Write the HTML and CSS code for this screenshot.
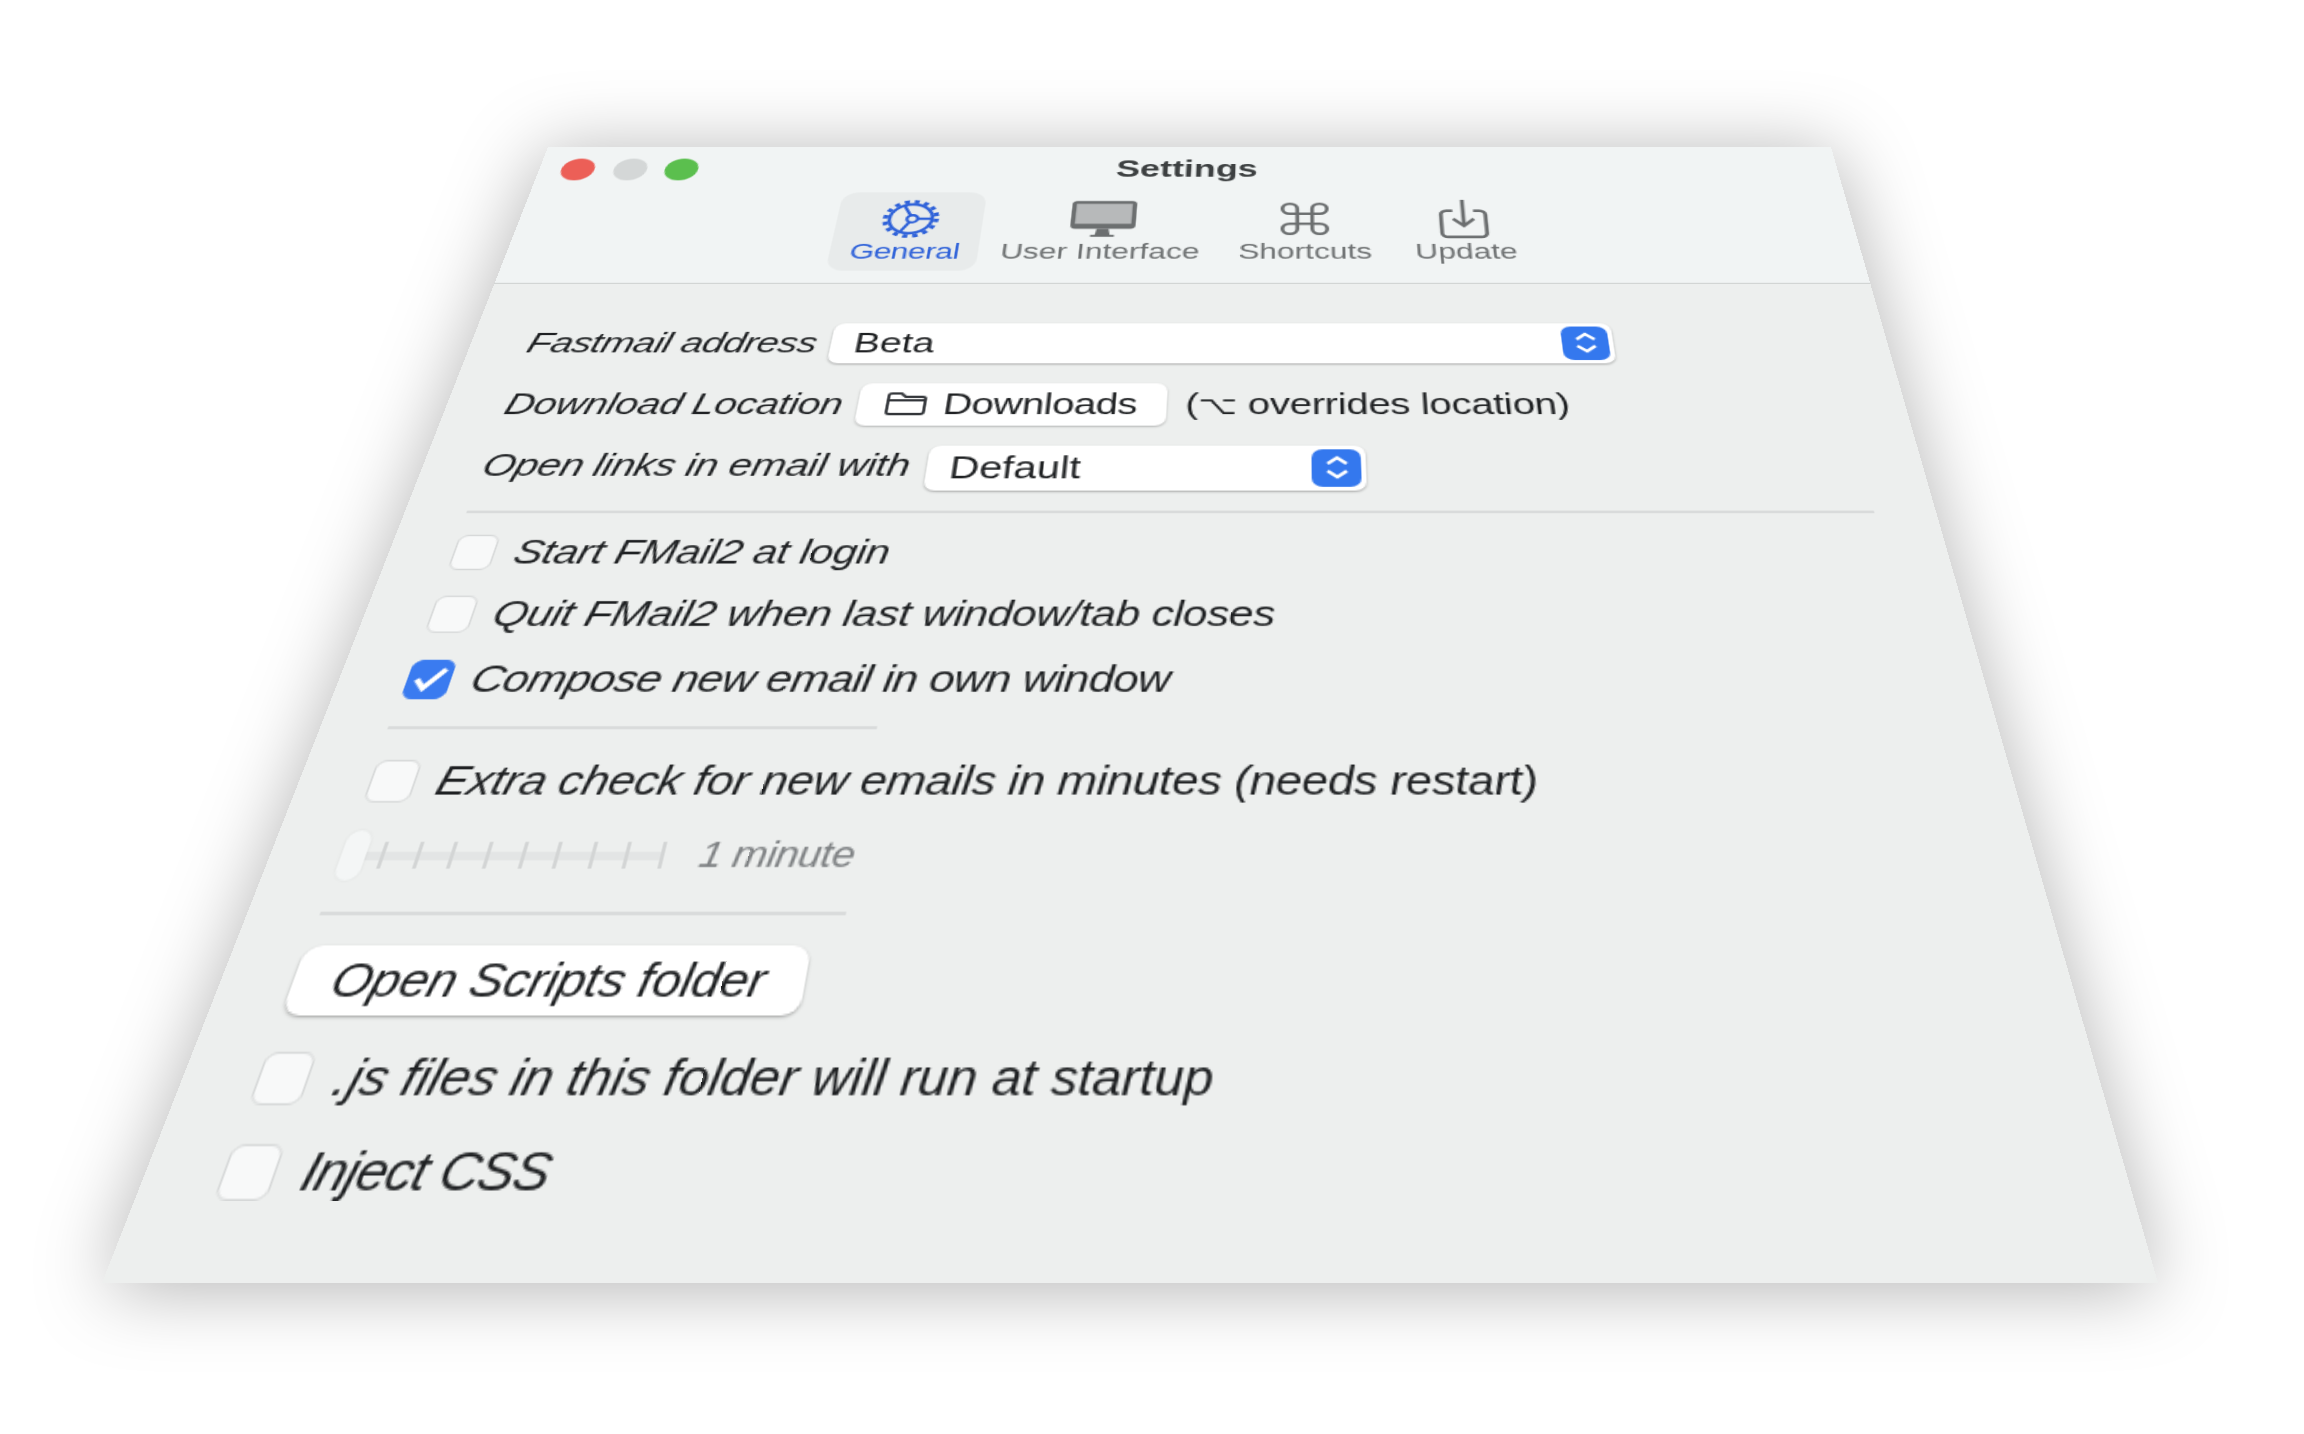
FILE: index.html
```html
<!DOCTYPE html>
<html lang="en">
<head>
<meta charset="utf-8">
<title>Settings</title>
<link rel="stylesheet" href="styles.css">
</head>
<body>
<div class="stage">
  <div class="window">
    <header class="titlebar">
      <div class="titlerow">
        <div class="lights"><span class="light red"></span><span class="light grey"></span><span class="light green"></span></div>
        <div class="title">Settings</div>
      </div>
      <nav class="tabs">
        <div class="tab active">
          <svg class="tabicon" width="42" height="42" viewBox="0 0 40 40" fill="none">
            <circle cx="20" cy="20" r="17.2" stroke="#2f62d9" stroke-width="3.4" stroke-dasharray="3.4 3.35"/>
            <circle cx="20" cy="20" r="14.4" stroke="#2f62d9" stroke-width="2.4"/>
            <circle cx="21" cy="20" r="3.6" stroke="#2f62d9" stroke-width="2.2"/>
            <path d="M24.5 20H34M19.5 16.8L14.5 7.5M19.5 23.2L14.5 32.5" stroke="#2f62d9" stroke-width="2.2"/>
          </svg>
          <span class="tablabel">General</span>
        </div>
        <div class="tab">
          <svg class="tabicon" width="48" height="42" viewBox="0 0 46 40" fill="none">
            <rect x="1" y="2" width="44" height="28" rx="3.5" fill="#6c6f70"/>
            <rect x="4" y="5" width="38" height="20" fill="#b7b9ba"/>
            <path d="M19 30h8l1 6h3v2H15v-2h3z" fill="#6c6f70"/>
          </svg>
          <span class="tablabel">User Interface</span>
        </div>
        <div class="tab">
          <svg class="tabicon" width="42" height="42" viewBox="0 0 24 24" fill="none">
            <path d="M15 6v12a3 3 0 1 0 3-3H6a3 3 0 1 0 3 3V6a3 3 0 1 0-3 3h12a3 3 0 1 0-3-3" stroke="#6c6f70" stroke-width="1.5"/>
          </svg>
          <span class="tablabel">Shortcuts</span>
        </div>
        <div class="tab last">
          <svg class="tabicon" width="38" height="42" viewBox="0 0 36 40" fill="none">
            <path d="M11 12H7a4 4 0 0 0-4 4v18a4 4 0 0 0 4 4h22a4 4 0 0 0 4-4V16a4 4 0 0 0-4-4h-4" stroke="#6c6f70" stroke-width="2.6"/>
            <path d="M18 1v26M11 20l7 7 7-7" stroke="#6c6f70" stroke-width="2.6"/>
          </svg>
          <span class="tablabel">Update</span>
        </div>
      </nav>
    </header>
    <main class="content">
      <div class="row first">
        <span class="label tight">Fastmail address</span>
        <div class="popup wide"><span>Beta</span>
          <span class="stepper"><svg width="18" height="24" viewBox="0 0 18 22" fill="none"><path d="M3 8l6-5 6 5M3 14l6 5 6-5" stroke="#fff" stroke-width="2.4"/></svg></span>
        </div>
      </div>
      <div class="row">
        <span class="label">Download Location</span>
        <div class="pathbtn">
          <svg width="28" height="22" viewBox="0 0 28 22" fill="none"><path d="M2 18V4a2 2 0 0 1 2-2h6l3 3h11a2 2 0 0 1 2 2v11a2 2 0 0 1-2 2H4a2 2 0 0 1-2-2zM2 8h24" stroke="#33363a" stroke-width="1.9"/></svg>
          <span class="pathname">Downloads</span>
        </div>
        <span class="note">(<span class="option">⌥</span> overrides location)</span>
      </div>
      <div class="row third">
        <span class="label raised">Open links in email with</span>
        <div class="popup narrow"><span>Default</span>
          <span class="stepper"><svg width="18" height="24" viewBox="0 0 18 22" fill="none"><path d="M3 8l6-5 6 5M3 14l6 5 6-5" stroke="#fff" stroke-width="2.4"/></svg></span>
        </div>
      </div>
      <hr class="rule full">
      <div class="check c1"><span class="box"></span><span class="label">Start FMail2 at login</span></div>
      <div class="check c2"><span class="box"></span><span class="label">Quit FMail2 when last window/tab closes</span></div>
      <div class="check c2"><span class="box on"><svg width="22" height="22" viewBox="0 0 22 22" fill="none"><path d="M3.5 11.5l5 6L18.5 4.5" stroke="#fff" stroke-width="3.4"/></svg></span><span class="label tight">Compose new email in own window</span></div>
      <hr class="rule short r2">
      <div class="check c3"><span class="box"></span><span class="label loose">Extra check for new emails in minutes (needs restart)</span></div>
      <div class="sliderrow">
        <div class="slider">
          <span class="tick"></span><span class="tick"></span><span class="tick"></span><span class="tick"></span><span class="tick"></span><span class="tick"></span><span class="tick"></span><span class="tick"></span><span class="tick"></span>
          <span class="knob"></span>
        </div>
        <span class="value">1 minute</span>
      </div>
      <hr class="rule short r3">
      <div class="action">Open Scripts folder</div>
      <div class="check c4"><span class="box"></span><span class="label normal">.js files in this folder will run at startup</span></div>
      <div class="check c5"><span class="box"></span><span class="label tighter">Inject CSS</span></div>
    </main>
  </div>
</div>
</body>
</html>
```
FILE: styles.css
```css
html, body { margin: 0; padding: 0; background: #fff; }
body { width: 2304px; height: 1434px; overflow: hidden; font-family: "Liberation Sans", Arial, sans-serif; }
.stage { width: 2304px; height: 1434px; filter: drop-shadow(0 6px 38px rgba(0,0,0,.3)); }
.window {
  width: 940px; height: 800px; background: #edefee; color: #1f2123; display: flex; flex-direction: column; overflow: hidden;
  transform-origin: 0 0;
  transform: matrix3d(1.36489,0,0,0, -0.60544,0.817,0,-0.00047, 0,0,1,0, 548,147,0,1);
}
.titlebar { height: 144px; box-sizing: border-box; background: #f1f4f4; border-bottom: 1.5px solid #cdd0d0; display: flex; flex-direction: column; flex: none; }
.titlerow { height: 50px; display: flex; align-items: flex-start; position: relative; }
.lights { display: flex; gap: 13.5px; padding: 13px 0 0 16px; }
.light { width: 24px; height: 24px; border-radius: 50%; }
.red { background: #ec5f57; } .grey { background: #d4d7d7; } .green { background: #5bbf4e; }
.title { position: absolute; left: 0; right: 2px; top: 9px; text-align: center; font-size: 26px; line-height: 30px; font-weight: 700; color: #3d4041; }
.tabs { display: flex; justify-content: center; gap: 3px; padding-right: 2px; }
.tab { display: flex; flex-direction: column; align-items: center; height: 81px; padding: 7px 12px 0; border-radius: 12px; box-sizing: border-box; color: #6f7273; font-size: 22px; line-height: 24px; }
.tab.active { background: #e8ebeb; color: #2f62d9; width: 103px; letter-spacing: -.3px; }
.tab.last { margin-left: 3px; }
.tabicon { height: 42px; flex: none; margin-bottom: 1px; }
.tablabel { white-space: nowrap; }
.content { padding: 38px 38px 0 37px; display: flex; flex-direction: column; align-items: flex-start; flex: 1; font-size: 26px; }
.row { height: 36px; display: flex; align-items: center; margin-top: 19px; padding-left: 1px; white-space: nowrap; }
.row.first { margin-top: 0; }
.row.third { margin-top: 18px; }
.label { font-style: italic; white-space: nowrap; line-height: 30px; letter-spacing: -.25px; }
.label.tight { letter-spacing: -.42px; }
.label.tighter { letter-spacing: -.6px; }
.label.loose { letter-spacing: -.18px; }
.label.normal { letter-spacing: 0; }
.label.raised { margin-top: -4px; }
.popup { height: 37px; box-sizing: border-box; background: #fff; border-radius: 7px; box-shadow: 0 1px 2px rgba(0,0,0,.3); margin-left: 10px; padding: 0 3px 0 15px; display: flex; align-items: center; justify-content: space-between; }
.popup.wide { width: 519px; }
.popup.narrow { width: 275px; margin-left: 11px; padding-left: 14px; }
.stepper { width: 31px; height: 31px; background: #3478ee; border-radius: 7px; display: flex; align-items: center; justify-content: center; }
.pathbtn { height: 37px; width: 199px; box-sizing: border-box; background: #fff; border-radius: 7px; box-shadow: 0 1px 2px rgba(0,0,0,.25); margin-left: 10px; padding-left: 17px; display: flex; align-items: center; gap: 10px; }
.pathname { letter-spacing: -.4px; }
.note { margin-left: 12px; letter-spacing: -.27px; }
.option { font-family: "DejaVu Sans", sans-serif; font-size: 22px; }
.rule { border: 0; height: 2px; background: #d9dbdb; margin: 0; flex: none; }
.rule.full { width: 864px; margin: 17px 0 0 1px; }
.rule.short { width: 274px; margin-left: 1px; }
.r2 { margin-top: 17px !important; }
.r3 { margin-top: 18px !important; }
.check { height: 30px; display: flex; align-items: center; gap: 12px; padding-left: 2px; flex: none; }
.c1 { margin-top: 15px; }
.c2 { margin-top: 16px; }
.c3 { margin-top: 18px; }
.c4 { margin-top: 17px; padding-left: 0; gap: 13px; }
.c5 { margin-top: 16px; padding-left: 0; gap: 13px; }
.box { width: 25px; height: 27px; box-sizing: border-box; background: #f8f9f9; border: 1px solid #d6d8d8; border-radius: 6px; flex: none; display: flex; align-items: center; justify-content: center; }
.box.on { background: #3a7bf0; border-color: #3a7bf0; }
.sliderrow { display: flex; align-items: center; height: 30px; margin-top: 16px; padding-left: 1px; }
.slider { width: 172px; height: 30px; position: relative; display: flex; align-items: center; justify-content: flex-end; gap: 16.6px; background: linear-gradient(#e3e5e5, #e3e5e5) left center / 100% 5px no-repeat; }
.tick { width: 2px; height: 16px; background: #d3d5d5; flex: none; }
.knob { position: absolute; left: 0; top: 0; width: 13px; height: 30px; border-radius: 7px; background: #f4f6f6; box-shadow: 0 0 2px rgba(0,0,0,.08); }
.value { font-style: italic; font-size: 22px; letter-spacing: -.25px; color: #7f8284; margin-left: 19px; }
.action { height: 38px; line-height: 38px; box-sizing: border-box; padding: 0 20px; margin: 17px 0 0 0; background: #fff; border-radius: 9px; box-shadow: 0 1px 2px rgba(0,0,0,.3); font-style: italic; letter-spacing: -.15px; white-space: nowrap; flex: none; }
```
